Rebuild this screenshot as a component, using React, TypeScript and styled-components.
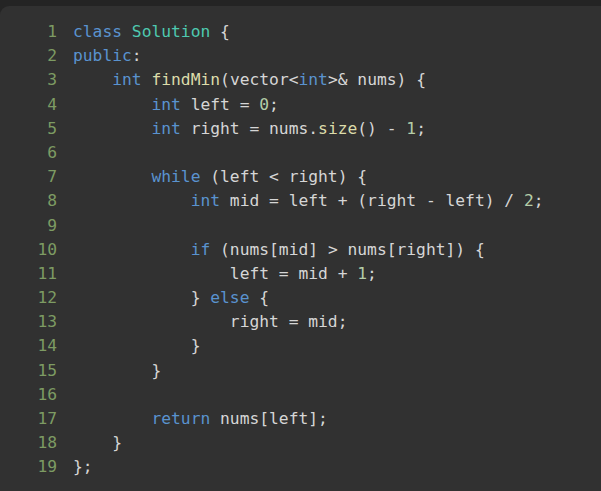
import React from "react";
import styled, { createGlobalStyle } from "styled-components";

const Global = createGlobalStyle`
  html, body { margin: 0; padding: 0; background: #242424; }
  body { width: 601px; height: 491px; overflow: hidden; }
`;

const Page = styled.div`
  padding-top: 6px;
  height: 491px;
  box-sizing: border-box;
`;

const Panel = styled.div`
  background: #313131;
  border-top-left-radius: 9px;
  height: 100%;
  box-sizing: border-box;
  padding: 14px 0 0 37px;
  display: grid;
  grid-template-columns: 20px 1fr;
  column-gap: 16px;
  font-family: "DejaVu Sans Mono", "Liberation Mono", monospace;
  font-size: 16.3px;
  line-height: 24.2px;
`;

const Gutter = styled.div`
  display: flex;
  flex-direction: column;
  align-items: flex-end;
  color: #7d9b63;
`;

const Code = styled.div`
  color: #d6d6d6;
  white-space: pre;
`;

const Line = styled.div`
  height: 24.2px;
`;

type Kind = "kw" | "type" | "fn" | "num";
const colors: Record<Kind, string> = {
  kw: "#5a93cf",
  type: "#4ec9b0",
  fn: "#dcdcaa",
  num: "#b5cea8",
};

const Tok = styled.span<{ $k: Kind }>`
  color: ${(p) => colors[p.$k]};
`;

type Seg = string | [Kind, string];
const lines: Seg[][] = [
  [["kw", "class"], " ", ["type", "Solution"], " {"],
  [["kw", "public"], ":"],
  ["    ", ["kw", "int"], " ", ["fn", "findMin"], "(vector<", ["kw", "int"], ">& nums) {"],
  ["        ", ["kw", "int"], " left = ", ["num", "0"], ";"],
  ["        ", ["kw", "int"], " right = nums.", ["fn", "size"], "() - ", ["num", "1"], ";"],
  [""],
  ["        ", ["kw", "while"], " (left < right) {"],
  ["            ", ["kw", "int"], " mid = left + (right - left) / ", ["num", "2"], ";"],
  [""],
  ["            ", ["kw", "if"], " (nums[mid] > nums[right]) {"],
  ["                left = mid + ", ["num", "1"], ";"],
  ["            } ", ["kw", "else"], " {"],
  ["                right = mid;"],
  ["            }"],
  ["        }"],
  [""],
  ["        ", ["kw", "return"], " nums[left];"],
  ["    }"],
  ["};"],
];

export default function App() {
  return (
    <Page>
      <Global />
      <Panel>
        <Gutter>
          {lines.map((_, i) => (
            <Line key={i}>{i + 1}</Line>
          ))}
        </Gutter>
        <Code>
          {lines.map((segs, i) => (
            <Line key={i}>
              {segs.map((s, j) =>
                typeof s === "string" ? (
                  <React.Fragment key={j}>{s}</React.Fragment>
                ) : (
                  <Tok key={j} $k={s[0]}>
                    {s[1]}
                  </Tok>
                )
              )}
            </Line>
          ))}
        </Code>
      </Panel>
    </Page>
  );
}
